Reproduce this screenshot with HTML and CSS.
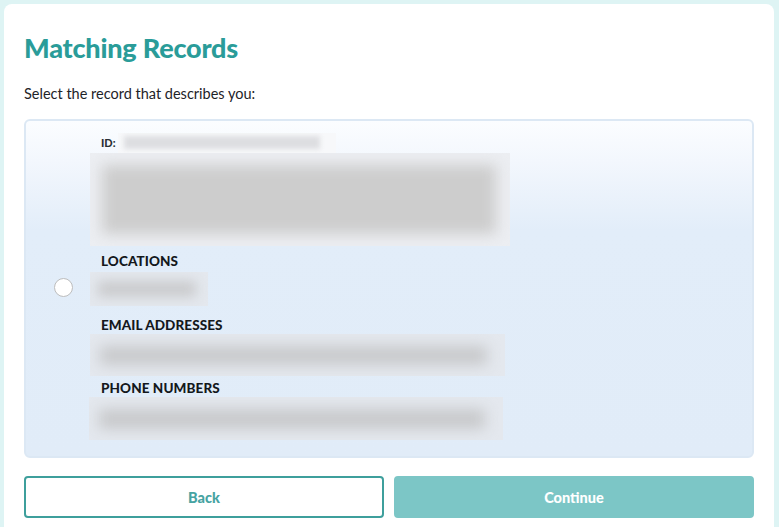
FILE: index.html
```html
<!DOCTYPE html>
<html lang="en">
<head>
<meta charset="utf-8">
<title>Matching Records</title>
<link rel="stylesheet" href="styles.css">
</head>
<body>
<main class="card">
  <h1 class="title">Matching Records</h1>
  <p class="lead">Select the record that describes you:</p>
  <label class="record">
    <span class="radio-col"><span class="radio"></span></span>
    <span class="details">
      <span class="id-row"><span class="id-label">ID:</span><span class="redact redact-id"><span class="smudge"></span></span></span>
      <span class="redact redact-main"><span class="smudge"></span></span>
      <span class="field-label">LOCATIONS</span>
      <span class="redact redact-loc"><span class="smudge"></span></span>
      <span class="field-label">EMAIL ADDRESSES</span>
      <span class="redact redact-line redact-email"><span class="smudge"></span></span>
      <span class="field-label">PHONE NUMBERS</span>
      <span class="redact redact-line redact-phone"><span class="smudge"></span></span>
    </span>
  </label>
  <div class="actions">
    <button class="btn btn-back" type="button">Back</button>
    <button class="btn btn-continue" type="button" disabled>Continue</button>
  </div>
</main>
</body>
</html>
```

FILE: styles.css
```css
html, body {
  margin: 0;
  padding: 0;
}
body {
  background: #def4f4;
  font-family: Lato, "Open Sans", sans-serif;
  color: #1e2328;
  height: 527px;
  overflow: hidden;
}
.card {
  margin: 4px 5px 0 4px;
  background: #ffffff;
  border-radius: 8px 8px 0 0;
  padding: 28px 20px 0;
  height: 523px;
  box-sizing: border-box;
  overflow: hidden;
}
.title {
  margin: 0;
  font-size: 27px;
  line-height: 32px;
  font-weight: 900;
  color: #2a9c99;
  letter-spacing: -0.2px;
}
.lead {
  margin: 20px 0 0;
  font-size: 14.5px;
  line-height: 20px;
  color: #1e2328;
}
.record {
  margin-top: 15px;
  display: flex;
  border: 2px solid #dce8f4;
  border-radius: 6px;
  height: 339px;
  box-sizing: border-box;
  padding: 11px 0 16px;
  background: linear-gradient(to bottom, #fbfdff 0px, #f3f7fd 40px, #e2edf9 110px, #e1ecf8 100%);
}
.radio-col {
  width: 75px;
  display: flex;
  align-items: center;
  justify-content: center;
  padding-top: 2px;
}
.radio {
  width: 19px;
  height: 19px;
  border-radius: 50%;
  border: 1.5px solid #bdbdbd;
  background: #ffffff;
  box-sizing: border-box;
}
.details {
  display: flex;
  flex-direction: column;
  flex: 1;
}
.id-row {
  display: flex;
  align-items: center;
  height: 21px;
}
.id-label {
  font-size: 11px;
  font-weight: 900;
  color: #2a2f35;
}
.field-label {
  display: block;
  font-size: 13.5px;
  line-height: 18px;
  font-weight: 900;
  color: #14181c;
  letter-spacing: 0.1px;
}
.redact {
  display: block;
  position: relative;
  overflow: hidden;
}
.smudge {
  position: absolute;
  display: block;
  filter: blur(7px);
}
.redact-id {
  width: 218px;
  height: 20px;
  background: #f7f8fa;
  margin-left: 2px;
}
.redact-id .smudge {
  inset: 3px 16px 4px 6px;
  background: #dddee1;
  filter: blur(2.5px);
}
.redact-main {
  width: 420px;
  height: 93px;
  margin-left: -11px;
  margin-bottom: 6px;
  background: #eceef2;
}
.redact-main .smudge {
  inset: 12px 14px 12px 12px;
  background: #cdcdcd;
}
.redact-loc {
  width: 118px;
  height: 34px;
  margin: 2px 0 10px -11px;
  background: #e4e8ee;
}
.redact-loc .smudge {
  inset: 9px 12px 9px 8px;
  background: #cacbcd;
  filter: blur(6px);
}
.redact-line {
  height: 42px;
  margin-left: -11px;
  background: #e4e8ee;
}
.redact-line .smudge {
  inset: 12px 18px 11px 10px;
  background: #c8c9cb;
  filter: blur(7px);
}
.redact-email {
  width: 415px;
  margin-bottom: 3px;
}
.redact-phone {
  width: 414px;
  height: 43px;
  margin-left: -12px;
}
.actions {
  margin-top: 18px;
  display: grid;
  grid-template-columns: 1fr 1fr;
  gap: 10px;
}
.btn {
  height: 42px;
  border-radius: 4px;
  font-family: Lato, "Open Sans", sans-serif;
  font-size: 14.5px;
  font-weight: 900;
  cursor: pointer;
}
.btn-back {
  background: #ffffff;
  border: 2px solid #3e9f9c;
  color: #46a3a2;
}
.btn-continue {
  background: #7cc6c6;
  border: 2px solid #7cc6c6;
  color: #ffffff;
}
```
